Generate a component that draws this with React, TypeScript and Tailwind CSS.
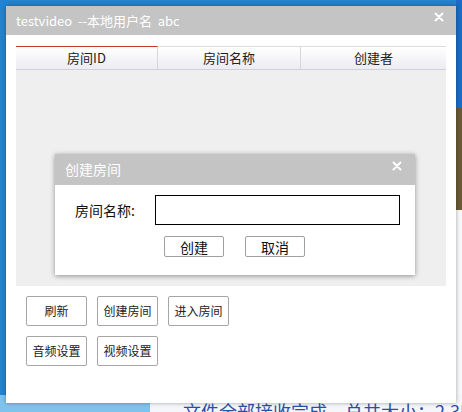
import React from "react";

const font = { fontFamily: '"Noto Sans CJK SC", "Noto Sans", sans-serif' };

function CloseIcon({ className }: { className?: string }) {
  return (
    <svg className={className} viewBox="0 0 10 10" fill="none" stroke="currentColor" strokeWidth={2} strokeLinecap="round">
      <path d="M1.5 1.5l7 7M8.5 1.5l-7 7" />
    </svg>
  );
}

function Btn({ label }: { label: string }) {
  return (
    <button className="w-[61px] h-[30px] bg-white border border-[#a6a6a6] rounded-[2px] text-[12px] text-[#222] flex items-center justify-center">
      {label}
    </button>
  );
}

export default function App() {
  return (
    <div className="relative w-[462px] h-[412px] overflow-hidden bg-[#2283d2]" style={font}>
      {/* desktop behind the window */}
      <div className="absolute left-[456px] top-0 w-[6px] h-[108px] bg-[#1a6cc4]" />
      <div className="absolute left-[456px] top-[108px] w-[6px] h-[102px] bg-[#6a5a34]" />
      <div className="absolute left-[456px] top-[210px] w-[6px] h-[202px] bg-[#f7f8fa]" />
      <div className="absolute left-0 top-[395px] w-[462px] h-[17px] bg-[#f4f6f9]" />
      <div className="absolute left-0 top-[395px] w-[150px] h-[17px] bg-[#7fc3ec]" />
      <div className="absolute left-[183px] top-[399px] text-[18px] leading-[24px] text-[#2a4ea8] whitespace-nowrap">
        文件全部接收完成，总共大小：2.3MB 文
      </div>

      {/* main window */}
      <div className="absolute left-[6px] top-[6px] w-[450px] h-[397px] bg-white flex flex-col shadow-[0_0_4px_rgba(0,0,0,0.35)]">
        <div className="h-[29px] bg-[#c4c4c4] flex items-center justify-between pl-[10px] pr-[12px] shrink-0">
          <span className="text-[13px] text-white whitespace-pre">testvideo  --本地用户名  abc</span>
          <CloseIcon className="w-[10px] h-[10px] text-white -mt-[8px]" />
        </div>

        <div className="flex flex-col px-[10px] pt-[11px]">
          <div className="relative h-[240px] bg-[#efefef] flex flex-col">
            <div className="grid grid-cols-[142px_143px_145px] h-[24px] border-t border-[#dcdcdc] border-b border-b-[#cfd0de] bg-gradient-to-b from-white to-[#ececf1] text-[13px] text-[#222]">
              <div className="flex items-center justify-center border-r border-[#d6d6de] -mt-px border-t border-t-[#c0392b]">房间ID</div>
              <div className="flex items-center justify-center border-r border-[#d6d6de]">房间名称</div>
              <div className="flex items-center justify-center">创建者</div>
            </div>

            {/* create room dialog */}
            <div className="absolute left-[39px] top-[108px] w-[360px] h-[121px] bg-white flex flex-col shadow-[0_1px_5px_rgba(0,0,0,0.4)]">
              <div className="h-[31px] bg-[#c4c4c4] flex items-center justify-between pl-[10px] pr-[13px] shrink-0">
                <span className="text-[14px] text-white">创建房间</span>
                <CloseIcon className="w-[10px] h-[10px] text-white -mt-[8px]" />
              </div>
              <div className="flex items-center pt-[10px] pl-[20px]">
                <span className="w-[80px] text-[14px] text-[#111]">房间名称:</span>
                <div className="w-[245px] h-[30px] border border-black" />
              </div>
              <div className="flex gap-[21px] pl-[109px] pt-[11px]">
                <button className="w-[60px] h-[21px] bg-white border border-[#a0a0a0] rounded-[2px] text-[14px] leading-none text-[#111] flex items-center justify-center">创建</button>
                <button className="w-[60px] h-[21px] bg-white border border-[#a0a0a0] rounded-[2px] text-[14px] leading-none text-[#111] flex items-center justify-center">取消</button>
              </div>
            </div>
          </div>
        </div>

        <div className="flex flex-col gap-[10px] pl-[20px] pt-[10px]">
          <div className="flex gap-[10px]">
            <Btn label="刷新" />
            <Btn label="创建房间" />
            <Btn label="进入房间" />
          </div>
          <div className="flex gap-[10px]">
            <Btn label="音频设置" />
            <Btn label="视频设置" />
          </div>
        </div>
      </div>
    </div>
  );
}
